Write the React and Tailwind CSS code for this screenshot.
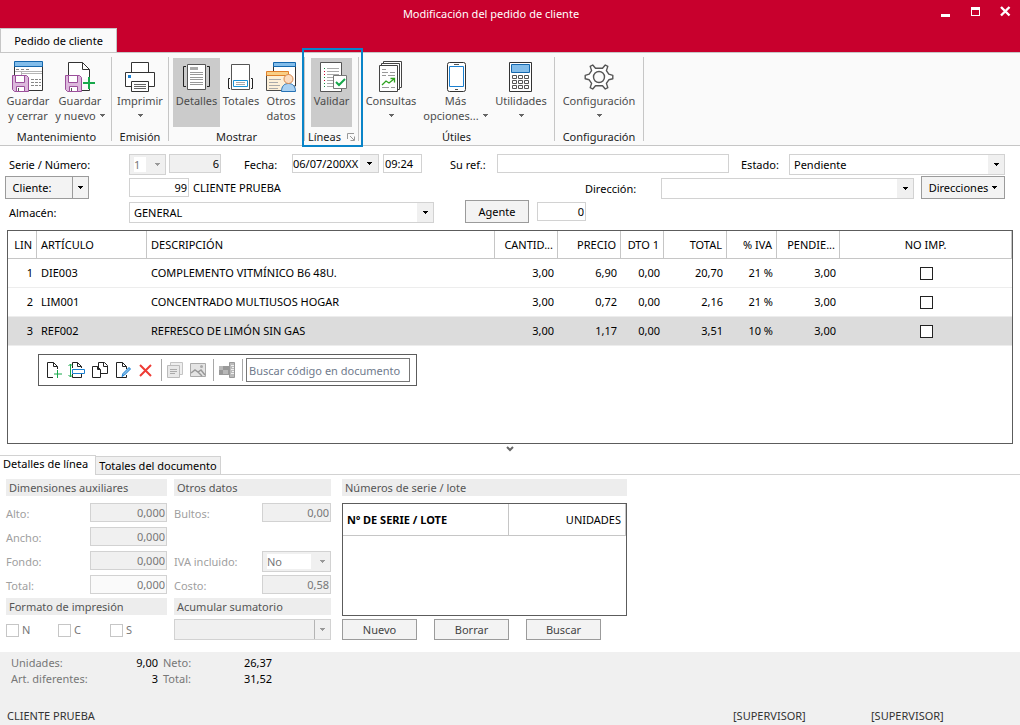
import React from 'react';

function Caret({ className = 'text-black' }) {
  return (
    <svg width="5" height="3" viewBox="0 0 5 3" className={`shrink-0 ${className}`} fill="currentColor" shapeRendering="crispEdges" aria-hidden="true">
      <path d="M0 0h5v1H0zM1 1h3v1H1zM2 2h1v1H2z" />
    </svg>
  );
}

/* ---------- ribbon icons ---------- */

function Floppy({ x = 0 }) {
  return (
    <g transform={`translate(${x} 14)`}>
      <path d="M.5.5h14l2 2v14h-14l-2-2z" fill="#dcb8dc" stroke="#9b4f9b" />
      <path d="M3.5.5h9v7h-9z" fill="#fff" stroke="#9b4f9b" />
      <path d="M4.5 16.5v-5h8v5z" fill="#fff" stroke="#9b4f9b" />
      <path d="M6 13h1v3H6z" fill="#555" />
    </g>
  );
}

function SaveCloseIcon() {
  return (
    <svg width="32" height="32" viewBox="0 0 32 32" fill="none" aria-hidden="true">
      <path d="M2.5 5v24.5h28V5" fill="#fff" stroke="#333" />
      <path d="M2.5.5h28v5h-28z" fill="#83bdea" stroke="#1467ad" />
      <path d="M3 10.500h27M9.500 11v3M10 12.500h20" stroke="#b5b5b5" />
      <path d="M4 8.500h3M9 8.500h3M14 8.500h3M19 18.500h3M23 18.500h3M27 18.500h2M19 21.500h3M23 21.500h3M27 21.500h2M19 24.500h3M23 24.500h3M27 24.500h2" stroke="#888" />
      <Floppy />
    </svg>
  );
}

function SaveNewIcon() {
  return (
    <svg width="32" height="32" viewBox="0 0 32 32" fill="none" aria-hidden="true">
      <path d="M4.5 29.5v-28h14l7 7v21z" fill="#fff" stroke="#333" />
      <path d="M18.5 1.5v7h7" stroke="#333" />
      <path d="M17 18h15v12H17z" fill="#fafafa" />
      <path d="M25.5 9v7" stroke="#333" />
      <path d="M17 29.5h8.500v-2" stroke="#333" />
      <path d="M25 16v12M19 22h12" stroke="#17a84b" strokeWidth="2" />
      <Floppy x={1} />
    </svg>
  );
}

function PrinterIcon() {
  return (
    <svg width="32" height="32" viewBox="0 0 32 32" fill="none" stroke="#333" aria-hidden="true">
      <path d="M7.5 11V1.5h17V11" fill="#fff" />
      <path d="M1.5 11.5h29v14h-29z" fill="#fff" />
      <path d="M4 14h3v3H4z" fill="#1a7fd0" stroke="none" />
      <path d="M7.5 20.5h17v10h-17z" fill="#fff" />
      <path d="M10 23.5h12M10 25.5h12M10 27.5h12" stroke="#666" />
    </svg>
  );
}

function DetailsIcon() {
  return (
    <svg width="32" height="32" viewBox="0 0 32 32" fill="none" aria-hidden="true">
      <path d="M6.5 3.5h18v25h-18z" fill="#fff" stroke="#555" />
      <path d="M9 6h8v3H9z" fill="#aaa" />
      <path d="M9 11.5h13M9 13.5h13M9 16.5h13M9 18.5h13M9 21.5h13M9 23.5h13" stroke="#999" />
      <path d="M5 5.5H2.5v20H5M26 5.5h2.5v20H26" stroke="#222" />
    </svg>
  );
}

function TotalsIcon() {
  return (
    <svg width="32" height="32" viewBox="0 0 32 32" fill="none" aria-hidden="true">
      <path d="M6.5 3.5h18v25h-18z" fill="#fff" stroke="#555" />
      <path d="M8.5 19.5h14v6h-14z" fill="#fff" stroke="#1a93d6" />
      <path d="M11 21.5h9M11 23.5h9" stroke="#aaa" />
      <path d="M5 17.5H3.5v10H5M26 17.5h1.5v10H26" stroke="#222" />
    </svg>
  );
}

function OtherDataIcon() {
  return (
    <svg width="32" height="32" viewBox="0 0 32 32" fill="none" aria-hidden="true">
      <path d="M8.5 5h22v20h-22z" fill="#fff" stroke="#333" />
      <path d="M8.5 1.5h22v4h-22z" fill="#83bdea" stroke="#1467ad" />
      <path d="M1.5 11.5h22v18h-22z" fill="#fdf0d8" stroke="#4a4a4a" />
      <path d="M1.5 10.5h22v4h-22z" fill="#f9cf86" stroke="#e0812b" />
      <path d="M4 18.5h12M4 21.5h9M4 24.5h11M4 27.5h9" stroke="#aaa" />
      <path d="M16.5 30.5c0-5 2.5-8 7-8s7 3 7 8z" fill="#a9d1f2" stroke="#2672b5" />
      <circle cx="23.5" cy="18" r="4.5" fill="#fbdcc0" stroke="#d8894f" />
    </svg>
  );
}

function ValidateIcon() {
  return (
    <svg width="32" height="32" viewBox="0 0 32 32" fill="none" aria-hidden="true">
      <path d="M4.5 1.5h21v29h-21z" fill="#fff" stroke="#555" />
      <path d="M11 7.5h12M11 10.5h12M11 13.500h12M11 16.5h6M11 19.5h6M11 22.500h6M11 25.500h6" stroke="#aaa" />
      <path d="M8 7h1v1H8zM8 16h1v1H8zM8 22h1v1H8zM8 25h1v1H8z" fill="#128a3c" />
      <path d="M8 10h1v1H8zM8 13h1v1H8zM8 19h1v1H8z" fill="#c8002d" />
      <path d="M17.5 14.5h13v13h-13z" fill="#fff" stroke="#777" />
      <path d="M20 21l3 3 6-6" stroke="#17a84b" strokeWidth="2" />
    </svg>
  );
}

function QueriesIcon() {
  return (
    <svg width="32" height="32" viewBox="0 0 32 32" fill="none" stroke="#444" aria-hidden="true">
      <path d="M8.5.5h18v26h-18z" fill="#fff" />
      <path d="M6.5 2.5h18v26h-18z" fill="#fff" />
      <path d="M4.5 4.5h18v26h-18z" fill="#fff" />
      <path d="M7 8.5h4M7 11.5h6M15 11.5h5M7 14.5h4M13 14.5h7M7 26.5h7M16 26.5h4" stroke="#999" />
      <path d="M7 24l4-4 3 2 5-4M15.5 17.5h4v4" stroke="#2ea21f" strokeWidth="1.300" />
    </svg>
  );
}

function PhoneIcon() {
  return (
    <svg width="32" height="32" viewBox="0 0 32 32" fill="none" aria-hidden="true">
      <rect x="7.5" y="1.5" width="18" height="29" rx="2" fill="#fff" stroke="#333" />
      <path d="M9.5 5.5h14v20h-14z" fill="#fff" stroke="#1a7fd0" />
      <path d="M14 3.5h5M15 28.5h3" stroke="#555" />
    </svg>
  );
}

function CalculatorIcon() {
  return (
    <svg width="32" height="32" viewBox="0 0 32 32" fill="none" aria-hidden="true">
      <path d="M4.5 1.5h22v29h-22z" fill="#fff" stroke="#333" />
      <path d="M6.5 3.5h18v8h-18z" fill="#83bdea" stroke="#1467ad" />
      <path
        d="M7.5 14.5h4v3h-4zM13.5 14.5h4v3h-4zM19.5 14.5h4v3h-4zM7.5 19.5h4v3h-4zM13.5 19.5h4v3h-4zM19.5 19.5h4v3h-4zM7.5 24.5h4v3h-4zM13.5 24.5h4v3h-4zM19.5 24.5h4v3h-4z"
        stroke="#555"
      />
    </svg>
  );
}

function GearIcon() {
  return (
    <svg width="32" height="32" viewBox="0 0 32 32" fill="none" stroke="#555" strokeLinejoin="round" aria-hidden="true">
      <path d="M12.500 7.300L9.700 4L7.200 5.400L8.600 9.600L6.200 13.200L2.200 14.400V17.800L6.200 18.800L8.600 22.400L7.200 26.600L9.700 28L12.500 24.700H19.500L22.300 28L24.800 26.600L23.400 22.400L25.800 18.800L29.800 17.800V14.400L25.800 13.200L23.400 9.600L24.800 5.400L22.300 4L19.500 7.300Z" fill="#fff" strokeWidth="1.400" />
      <circle cx="16" cy="16" r="5.500" strokeWidth="1.400" fill="#fafafa" />
    </svg>
  );
}

/* ---------- ribbon ---------- */

function RibbonButton({ icon, lines, caret, active, className }) {
  const last = lines.length - 1;
  return (
    <button
      type="button"
      className={`flex h-[69px] shrink-0 flex-col items-center pt-[3px] leading-[15px] whitespace-nowrap text-[#4c4c4c] ${active ? 'bg-[#cbcbcb]' : ''} ${className}`}
    >
      {icon}
      {lines.map((line, i) => (
        <span key={line} className="flex items-center gap-1">
          {line}
          {caret === 'inline' && i === last && <Caret className="text-[#666]" />}
        </span>
      ))}
      {caret === 'below' && <span className="flex h-[15px] items-center"><Caret className="text-[#666]" /></span>}
    </button>
  );
}

function RibbonGroup({ title, children, className = '', extra, highlight }) {
  return (
    <section className={`relative flex h-[84px] shrink-0 flex-col border-r border-[#c6c6c6] pt-px ${className}`}>
      <div className="flex">{children}</div>
      <h2 className="flex items-center justify-center gap-[6px] pt-[3px] leading-[14px] text-[#222]">
        {title}
        {extra}
      </h2>
      {highlight && <div className="pointer-events-none absolute -top-[9px] -right-[5px] -bottom-[6px] -left-[3px] border-2 border-[#0a84c8]" />}
    </section>
  );
}

function LauncherIcon() {
  return (
    <svg width="8" height="8" viewBox="0 0 8 8" fill="none" stroke="#999" aria-hidden="true">
      <path d="M.5 6V.5H7M3 3l4 4M7.5 3.5v4h-4" />
    </svg>
  );
}

function Ribbon() {
  return (
    <div className="flex border-y border-[#c6c6c6] bg-[#fafafa] pt-1 pb-1">
      <RibbonGroup title="Mantenimiento" className="w-[112px] pl-[2px]">
        <RibbonButton className="w-[52px]" icon={<SaveCloseIcon />} lines={['Guardar', 'y cerrar']} />
        <RibbonButton className="w-[52px]" icon={<SaveNewIcon />} lines={['Guardar', 'y nuevo']} caret="inline" />
      </RibbonGroup>
      <RibbonGroup title="Emisión" className="w-[57px]">
        <RibbonButton className="w-14" icon={<PrinterIcon />} lines={['Imprimir']} caret="below" />
      </RibbonGroup>
      <RibbonGroup title="Mostrar" className="w-[136px]">
        <RibbonButton className="ml-1 w-[47px]" icon={<DetailsIcon />} lines={['Detalles']} active />
        <RibbonButton className="w-[42px]" icon={<TotalsIcon />} lines={['Totales']} />
        <RibbonButton className="w-[38px]" icon={<OtherDataIcon />} lines={['Otros', 'datos']} />
      </RibbonGroup>
      <RibbonGroup title="Líneas" className="w-[54px]" extra={<LauncherIcon />} highlight>
        <RibbonButton className="ml-[6px] w-[41px]" icon={<ValidateIcon />} lines={['Validar']} active />
      </RibbonGroup>
      <RibbonGroup title="Útiles" className="w-[196px]">
        <RibbonButton className="ml-1 w-14" icon={<QueriesIcon />} lines={['Consultas']} caret="below" />
        <RibbonButton className="w-[73px]" icon={<PhoneIcon />} lines={['Más', 'opciones...']} caret="inline" />
        <RibbonButton className="w-[58px]" icon={<CalculatorIcon />} lines={['Utilidades']} caret="below" />
      </RibbonGroup>
      <RibbonGroup title="Configuración" className="w-[89px]">
        <RibbonButton className="w-[88px]" icon={<GearIcon />} lines={['Configuración']} caret="below" />
      </RibbonGroup>
    </div>
  );
}

/* ---------- form controls ---------- */

function Combo({ id, value, disabled, label, divider, className = '' }) {
  return (
    <div className={`flex h-[21px] border border-[#d2d2d2] pl-1 ${disabled ? 'bg-[#f0f0f0]' : 'bg-white'} ${className}`}>
      <select
        id={id}
        aria-label={label}
        disabled={disabled}
        defaultValue={value}
        className={`min-w-0 flex-1 appearance-none opacity-100 outline-none ${disabled ? 'my-[2px] text-[#777]' : ''} ${disabled && value ? 'bg-white' : ''}`}
      >
        <option>{value}</option>
      </select>
      <span className={`flex items-center justify-center ${disabled ? 'ml-[3px] w-4' : 'w-4 bg-[#f0f0f0]'} ${divider ? 'border-l border-[#b4b4b4]' : ''}`}>
        <Caret className={disabled ? 'text-[#999]' : 'text-black'} />
      </span>
    </div>
  );
}

function Field({ id, value = '', label, disabled, className = '' }) {
  return (
    <input
      id={id}
      type="text"
      aria-label={label}
      defaultValue={value}
      disabled={disabled}
      className={`mb-[2px] h-[19px] min-w-0 border border-[#d2d2d2] px-px outline-none ${className}`}
    />
  );
}

function FormLabel({ htmlFor, children, className = '' }) {
  return (
    <label htmlFor={htmlFor} className={`h-[21px] shrink-0 leading-[21px] ${className}`}>
      {children}
    </label>
  );
}

const BTN = 'flex shrink-0 items-center justify-center border border-[#9b9b9b] bg-[#f3f3f3]';

function HeaderForm() {
  return (
    <form className="pt-[5px] pr-[15px] pl-[5px]">
      <div className="flex h-6 items-end">
        <FormLabel htmlFor="serie" className="w-[124px] pl-1">Serie / Número:</FormLabel>
        <Combo id="serie" value="1" disabled className="w-[37px]" />
        <Field label="Número" value="6" className="ml-[3px] w-[52px] bg-[#f0f0f0] text-right" />
        <FormLabel htmlFor="fecha" className="ml-[23px] w-12">Fecha:</FormLabel>
        <div className="mb-[2px] flex h-[19px] w-[87px] border border-[#d2d2d2]">
          <input id="fecha" type="text" defaultValue="06/07/200XX" className="min-w-0 flex-1 outline-none" />
          <span className="flex w-[18px] items-center justify-center bg-[#f0f0f0]"><Caret /></span>
        </div>
        <Field label="Hora" value="09:24" className="ml-1 w-[39px]" />
        <FormLabel htmlFor="ref" className="ml-7 w-[47px]">Su ref.:</FormLabel>
        <Field id="ref" className="flex-1" />
        <FormLabel htmlFor="estado" className="ml-3 w-12">Estado:</FormLabel>
        <Combo id="estado" value="Pendiente" className="w-[216px]" />
      </div>
      <div className="flex h-6 items-end">
        <div className="flex w-[124px]">
          <button type="button" className={`${BTN} h-[23px] w-[68px] pr-[14px]`}>Cliente:</button>
          <button type="button" aria-label="Opciones de cliente" className={`${BTN} h-[23px] w-4 border-l-0`}><Caret /></button>
        </div>
        <Field label="Código de cliente" value="99" className="w-[60px] text-right" />
        <output className="mb-[2px] ml-1 w-[392px] leading-[19px]">CLIENTE PRUEBA</output>
        <FormLabel htmlFor="direccion" className="w-[76px]">Dirección:</FormLabel>
        <Combo id="direccion" value="" className="flex-1" />
        <button type="button" className={`${BTN} ml-[7px] h-[23px] w-[84px] gap-1`}>Direcciones <Caret /></button>
      </div>
      <div className="flex h-6 items-end">
        <FormLabel htmlFor="almacen" className="w-[124px] pl-1">Almacén:</FormLabel>
        <Combo id="almacen" value="GENERAL" className="w-[305px]" />
        <button type="button" className={`${BTN} ml-[31px] h-[23px] w-16`}>Agente</button>
        <Field label="Código de agente" value="0" className="ml-2 w-[49px] text-right" />
      </div>
    </form>
  );
}

/* ---------- lines table ---------- */

const COLUMNS = [
  { title: 'LIN', width: 'w-[29px]', align: 'text-right' },
  { title: 'ARTÍCULO', width: 'w-[110px]', align: 'text-left' },
  { title: 'DESCRIPCIÓN', width: '', align: 'text-left' },
  { title: 'CANTID...', width: 'w-[63px]', align: 'text-right' },
  { title: 'PRECIO', width: 'w-[63px]', align: 'text-right' },
  { title: 'DTO 1', width: 'w-[43px]', align: 'text-right' },
  { title: 'TOTAL', width: 'w-[63px]', align: 'text-right' },
  { title: '% IVA', width: 'w-[50px]', align: 'text-right' },
  { title: 'PENDIE...', width: 'w-[63px]', align: 'text-right' },
  { title: 'NO IMP.', width: 'w-[172px]', align: 'text-center' },
];

const LINES = [
  ['1', 'DIE003', 'COMPLEMENTO VITMÍNICO B6 48U.', '3,00', '6,90', '0,00', '20,70', '21 %', '3,00'],
  ['2', 'LIM001', 'CONCENTRADO MULTIUSOS HOGAR', '3,00', '0,72', '0,00', '2,16', '21 %', '3,00'],
  ['3', 'REF002', 'REFRESCO DE LIMÓN SIN GAS', '3,00', '1,17', '0,00', '3,51', '10 %', '3,00'],
];

function ToolButton({ label, disabled, children }) {
  return (
    <button type="button" aria-label={label} disabled={disabled} className="flex h-6 w-[23px] shrink-0 items-center justify-center">
      <svg width="17" height="18" viewBox="0 0 17 18" fill="none" aria-hidden="true">{children}</svg>
    </button>
  );
}

function ToolSeparator({ className = 'mr-px' }) {
  return <span className={`ml-1 h-[22px] w-px shrink-0 bg-[#a8a8a8] ${className}`} />;
}

function LineToolbar() {
  return (
    <div className="mt-2 ml-[30px] flex h-8 w-[379px] items-center border border-[#5c5c5c] bg-white pr-[6px] pl-[3px]">
      <ToolButton label="Nueva línea">
        <path d="M8 16.5H2.500v-15h6l4 4V8M8.500 1.500v4h4" stroke="#222" />
        <path d="M12.500 9v8M9 13h8" stroke="#17a84b" />
      </ToolButton>
      <ToolButton label="Insertar línea">
        <path d="M4.500 7V1.500h5l4 4V7M9.500 1.500v4h4M4.500 13v3.500h9V13" stroke="#222" />
        <path d="M4.500 8.500h12v4h-12z" fill="#fff" stroke="#1a7fd0" />
        <path d="M2.500 3v13M.5 5l2-2 2 2M.5 14l2 2 2-2" stroke="#17a84b" />
      </ToolButton>
      <ToolButton label="Duplicar línea">
        <path d="M7.500 12.500v-11h6l3 3v8zM12.500 1.500v4h4" fill="#fff" stroke="#222" />
        <path d="M1.500 16.500v-11h5l3 3v8zM6.500 5.500v3h3" fill="#fff" stroke="#222" />
      </ToolButton>
      <ToolButton label="Modificar línea">
        <path d="M12.500 14v2.500h-10v-15h6l4 4V8M8.500 1.500v4h4" stroke="#222" />
        <path d="M8 15.500l1-3 6-6 1.500 1.500-6 6z" fill="#83bdea" stroke="#1a7fd0" />
      </ToolButton>
      <ToolButton label="Borrar línea">
        <path d="M3 4l11 11M14 4L3 15" stroke="#ee3b35" strokeWidth="2" />
      </ToolButton>
      <ToolSeparator />
      <ToolButton label="Copiar texto" disabled>
        <path d="M4.500 1.500h12v12h-12z" fill="#eee" stroke="#c4c4c4" />
        <path d="M1.500 4.500h12v12h-12z" fill="#e8e8e8" stroke="#bbb" />
        <path d="M4 8.500h7M4 10.500h7M4 12.500h5" stroke="#aaa" />
      </ToolButton>
      <ToolButton label="Imagen" disabled>
        <path d="M1.500 2.500h15v13h-15z" fill="#e4e4e4" stroke="#aaa" />
        <path d="M2 12l4-3 3 2 3-2 4 5M9 11l4 4" stroke="#999" strokeWidth="1.500" />
        <circle cx="12.500" cy="5.500" r="1.500" fill="#aaa" />
      </ToolButton>
      <ToolSeparator />
      <ToolButton label="Medidas" disabled>
        <path d="M1 5h10v9H1z" fill="#999" />
        <path d="M1 5h4v4H1zM5 9h5v4H5z" fill="#b8b8b8" />
        <path d="M11.500 1.500h5v15h-5z" fill="#bbb" stroke="#999" />
        <path d="M13 4.500h3M14 6.500h2M13 8.500h3M14 10.500h2M13 12.500h3" stroke="#f0f0f0" />
      </ToolButton>
      <ToolSeparator className="mr-[3px]" />
      <input
        type="text"
        aria-label="Buscar código en documento"
        placeholder="Buscar código en documento"
        className="h-6 min-w-0 flex-1 border border-[#777] px-[2px] outline-none placeholder:text-[#6f7a8c]"
      />
    </div>
  );
}

function LinesTable() {
  return (
    <section className="mx-[7px] mt-[7px] flex-1 border border-[#5c5c5c]">
      <table className="w-full table-fixed border-separate border-spacing-0">
        <thead>
          <tr className="h-7">
            {COLUMNS.map((c) => (
              <th key={c.title} className={`border-r border-b border-[#c6c6c6] px-1 font-normal whitespace-nowrap ${c.width} ${c.align}`}>
                {c.title}
              </th>
            ))}
          </tr>
        </thead>
        <tbody>
          {LINES.map((line, i) => (
            <tr key={line[0]} className={`h-[29px] ${i === 2 ? 'bg-[#dcdcdc]' : ''}`}>
              {line.map((cell, j) => (
                <td key={COLUMNS[j].title} className={`border-b border-[#ededed] px-1 ${COLUMNS[j].align}`}>{cell}</td>
              ))}
              <td className="border-b border-[#ededed]">
                <input type="checkbox" aria-label={`No imprimir línea ${line[0]}`} className="mx-auto block h-[13px] w-[13px] appearance-none border border-[#222] bg-white" />
              </td>
            </tr>
          ))}
        </tbody>
      </table>
      <LineToolbar />
    </section>
  );
}

/* ---------- bottom panel ---------- */

function SectionTitle({ children }) {
  return <h3 className="h-[17px] bg-[#ededed] pl-[3px] leading-[17px] text-[#555]">{children}</h3>;
}

function DimRow({ id, label, value, light, width = 'w-[77px]' }) {
  return (
    <div className="flex h-6 items-end justify-between">
      <label htmlFor={id} className="leading-[21px] text-[#a0a0a0]">{label}</label>
      <Field id={id} value={value} disabled className={`text-right text-[#777] ${width} ${light ? 'bg-[#fafafa]' : 'bg-[#f0f0f0]'}`} />
    </div>
  );
}

function LineDetails() {
  return (
    <div className="flex h-[177px] shrink-0 items-start pt-1 pl-[6px]">
      <div className="w-[161px]">
        <SectionTitle>Dimensiones auxiliares</SectionTitle>
        <div className="pt-1 pb-[2px]">
          <DimRow id="alto" label="Alto:" value="0,000" />
          <DimRow id="ancho" label="Ancho:" value="0,000" />
          <DimRow id="fondo" label="Fondo:" value="0,000" />
          <DimRow id="total" label="Total:" value="0,000" light />
        </div>
        <SectionTitle>Formato de impresión</SectionTitle>
        <div className="flex pt-2 text-[#777]">
          {['N', 'C', 'S'].map((opt) => (
            <label key={opt} className="flex w-[52px] items-center gap-[3px] leading-[14px]">
              <input type="checkbox" disabled className="h-[13px] w-[13px] appearance-none border border-[#c6c6c6] bg-white" />
              {opt}
            </label>
          ))}
        </div>
      </div>
      <div className="ml-[7px] w-[157px]">
        <SectionTitle>Otros datos</SectionTitle>
        <div className="pt-1 pb-[2px]">
          <DimRow id="bultos" label="Bultos:" value="0,00" width="w-[69px]" />
          <div className="h-6" />
          <div className="flex h-6 items-end justify-between">
            <label htmlFor="iva" className="leading-[21px] text-[#a0a0a0]">IVA incluido:</label>
            <Combo id="iva" value="No" disabled className="w-[69px]" />
          </div>
          <DimRow id="costo" label="Costo:" value="0,58" width="w-[69px]" />
        </div>
        <SectionTitle>Acumular sumatorio</SectionTitle>
        <div className="pt-1">
          <Combo label="Acumular sumatorio" value="" disabled divider />
        </div>
      </div>
      <div className="ml-[11px] w-[285px]">
        <SectionTitle>Números de serie / lote</SectionTitle>
        <div className="mt-[7px] h-[113px] border border-[#5c5c5c]">
          <table className="w-full table-fixed border-separate border-spacing-0">
            <thead>
              <tr className="h-8">
                <th className="w-[166px] border-r border-b border-[#c6c6c6] px-1 text-left font-bold">Nº DE SERIE / LOTE</th>
                <th className="border-r border-b border-[#c6c6c6] px-1 text-right font-normal">UNIDADES</th>
              </tr>
            </thead>
          </table>
        </div>
        <div className="mt-[3px] flex gap-[17px] text-[#444]">
          {['Nuevo', 'Borrar', 'Buscar'].map((name) => (
            <button key={name} type="button" className={`${BTN} h-[21px] w-[75px]`}>{name}</button>
          ))}
        </div>
      </div>
    </div>
  );
}

function Tabs() {
  return (
    <div role="tablist" className="flex h-5 shrink-0 items-end">
      <button type="button" role="tab" aria-selected="true" className="flex h-5 w-24 items-start border-t border-r border-[#d2d2d2] pt-px pl-[3px]">
        Detalles de línea
      </button>
      <div className="flex h-5 flex-1 items-end border-b border-[#d2d2d2]">
        <button type="button" role="tab" aria-selected="false" className="h-[18px] w-[125px] border-t border-r border-[#d2d2d2] bg-[#f0f0f0]">
          Totales del documento
        </button>
      </div>
    </div>
  );
}

function StatusBar() {
  return (
    <footer className="flex h-[73px] shrink-0 flex-col justify-between bg-[#f0f0f0] pt-[3px] pb-[2px]">
      <dl className="grid w-[272px] grid-cols-[100px_1fr_auto_auto] pl-[11px] leading-4 text-[#777]">
        <dt>Unidades:</dt>
        <dd className="text-right text-black">9,00</dd>
        <dt className="w-16 pl-[5px]">Neto:</dt>
        <dd className="w-[50px] text-right text-black">26,37</dd>
        <dt>Art. diferentes:</dt>
        <dd className="text-right text-black">3</dd>
        <dt className="pl-[5px]">Total:</dt>
        <dd className="text-right text-black">31,52</dd>
      </dl>
      <div className="flex pl-[7px] leading-[14px] text-[#333]">
        <span className="flex-1">CLIENTE PRUEBA</span>
        <span className="w-[138px]">[SUPERVISOR]</span>
        <span className="w-[149px]">[SUPERVISOR]</span>
      </div>
    </footer>
  );
}

function TitleBar() {
  return (
    <header className="bg-[#c8002d]">
      <div className="grid h-7 grid-cols-[1fr_auto_1fr] items-center text-white">
        <h1 className="col-start-2 pr-[38px]">Modificación del pedido de cliente</h1>
        <div className="flex justify-end pb-[6px]">
          <button type="button" aria-label="Minimizar" className="flex h-5 w-[30px] items-center justify-center">
            <svg width="12" height="12" viewBox="0 0 12 12"><path d="M2 9h9v3H2z" fill="#fff" /></svg>
          </button>
          <button type="button" aria-label="Maximizar" className="flex h-5 w-[30px] items-center justify-center">
            <svg width="12" height="12" viewBox="0 0 12 12"><path d="M2 2h9v9H2zM3 5v5h7V5z" fill="#fff" fillRule="evenodd" /></svg>
          </button>
          <button type="button" aria-label="Cerrar" className="flex h-5 w-[30px] items-center justify-center">
            <svg width="12" height="12" viewBox="0 0 12 12"><path d="M2 2l8.500 8.500M10.500 2L2 10.500" stroke="#fff" strokeWidth="2.400" /></svg>
          </button>
        </div>
      </div>
      <div role="tablist" className="flex">
        <button type="button" role="tab" aria-selected="true" className="-mb-px h-[25px] w-[117px] border border-b-0 border-[#c6c6c6] bg-[#fafafa] text-black">
          Pedido de cliente
        </button>
      </div>
    </header>
  );
}

export default function App() {
  return (
    <div className="flex min-h-screen flex-col bg-white font-['Noto_Sans',sans-serif] text-[11px] leading-[14px] text-black">
      <TitleBar />
      <Ribbon />
      <HeaderForm />
      <LinesTable />
      <div className="flex h-[11px] shrink-0 items-start justify-center pt-[2px]">
        <svg width="8" height="6" viewBox="0 0 8 6" fill="none" aria-hidden="true">
          <path d="M1 1l3 3 3-3" stroke="#666" strokeWidth="2" />
        </svg>
      </div>
      <Tabs />
      <LineDetails />
      <StatusBar />
    </div>
  );
}
